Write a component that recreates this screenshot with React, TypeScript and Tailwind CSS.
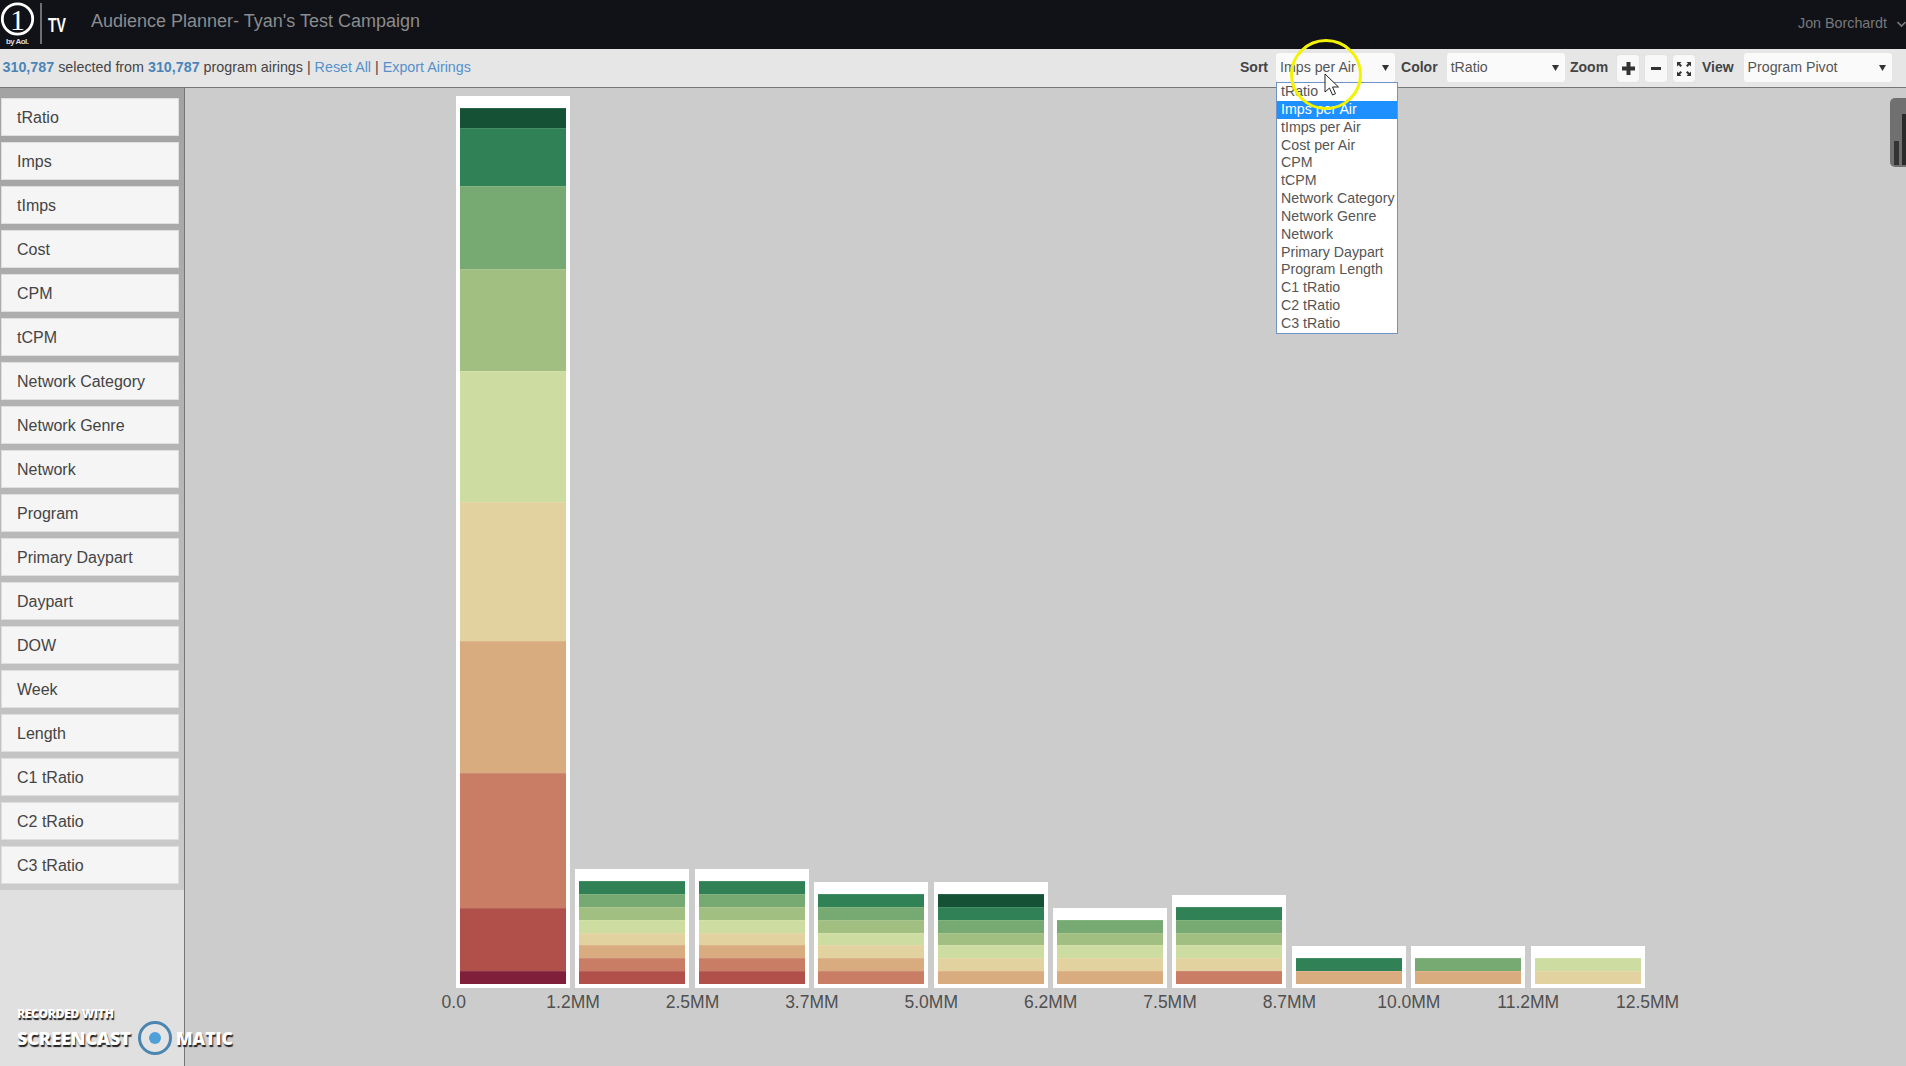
import React from 'react';

const filters = [
	'tRatio',
	'Imps',
	'tImps',
	'Cost',
	'CPM',
	'tCPM',
	'Network Category',
	'Network Genre',
	'Network',
	'Program',
	'Primary Daypart',
	'Daypart',
	'DOW',
	'Week',
	'Length',
	'C1 tRatio',
	'C2 tRatio',
	'C3 tRatio',
];

const sortOptions = [
	'tRatio',
	'Imps per Air',
	'tImps per Air',
	'Cost per Air',
	'CPM',
	'tCPM',
	'Network Category',
	'Network Genre',
	'Network',
	'Primary Daypart',
	'Program Length',
	'C1 tRatio',
	'C2 tRatio',
	'C3 tRatio',
];

const scale = ['#155235', '#308155', '#77aa72', '#a0bf80', '#cddca0', '#e2d2a0', '#d9ac7f', '#c97d65', '#b1504a', '#7f1f3a'];

// each bar: list of [scale index, height in px]
const step = 12.86;
const bars: [number, number][][] = [
	[[0, 20], [1, 58], [2, 83], [3, 102], [4, 131], [5, 139], [6, 132], [7, 135], [8, 63], [9, 13]],
	[1, 2, 3, 4, 5, 6, 7, 8].map((c) => [c, step] as [number, number]),
	[1, 2, 3, 4, 5, 6, 7, 8].map((c) => [c, step] as [number, number]),
	[1, 2, 3, 4, 5, 6, 7].map((c) => [c, step] as [number, number]),
	[0, 1, 2, 3, 4, 5, 6].map((c) => [c, step] as [number, number]),
	[2, 3, 4, 5, 6].map((c) => [c, step] as [number, number]),
	[1, 2, 3, 4, 5, 7].map((c) => [c, step] as [number, number]),
	[1, 6].map((c) => [c, step] as [number, number]),
	[2, 6].map((c) => [c, step] as [number, number]),
	[4, 5].map((c) => [c, step] as [number, number]),
];

const ticks = ['0.0', '1.2MM', '2.5MM', '3.7MM', '5.0MM', '6.2MM', '7.5MM', '8.7MM', '10.0MM', '11.2MM', '12.5MM'];

function Logo() {
	return (
		<svg width="76" height="49" viewBox="0 0 76 49" className="shrink-0">
			<circle cx="17.5" cy="19" r="15.2" fill="none" stroke="#fff" strokeWidth="2.8" />
			<text x="17.5" y="29.500" textAnchor="middle" fill="#fff" fontSize="30" fontFamily="'Liberation Serif', serif">
				1
			</text>
			<text x="6" y="43.5" fill="#ddd" fontSize="8" fontWeight="700" fontFamily="'Liberation Sans', sans-serif" textLength="23">
				by Aol.
			</text>
			<rect x="40.5" y="3" width="1" height="41" fill="#ccc" />
			<text
				x="48"
				y="31.5"
				fill="#fff"
				fontSize="21"
				fontWeight="700"
				fontFamily="'Liberation Sans', sans-serif"
				textLength="18"
				lengthAdjust="spacingAndGlyphs"
			>
				TV
			</text>
		</svg>
	);
}

function Caret() {
	return (
		<svg width="7" height="6" viewBox="0 0 7 6" className="shrink-0">
			<polygon points="0,0 7,0 3.5,6" fill="#333" />
		</svg>
	);
}

function FakeSelect({ value, className }: { value: string; className: string }) {
	return (
		<div className={`flex h-[29px] items-center justify-between rounded-[3px] bg-[#fafafa] pl-[4px] pr-[6px] text-[14.2px] text-[#555] ${className}`}>
			<span>{value}</span>
			<Caret />
		</div>
	);
}

function IconButton({ children }: { children: React.ReactNode }) {
	return (
		<div className="mt-[2px] flex h-[29px] w-[24px] items-center justify-center rounded-[4px] border border-[#e2e2e2] bg-[#f8f8f8]">
			{children}
		</div>
	);
}

function Toolbar() {
	return (
		<div className="flex h-[39px] shrink-0 items-center justify-between border-b border-[#777] bg-[#e6e6e6] pr-[14px] pb-[1px] pl-[2.500px] text-[14.3px] text-[#444]">
			<div>
				<b className="text-[#4a85b8]">310,787</b> selected from <b className="text-[#4a85b8]">310,787</b> program airings |{' '}
				<span className="text-[#5591cb]">Reset All</span> | <span className="text-[#5591cb]">Export Airings</span>
			</div>
			<div className="flex items-center text-[14px] font-bold">
				<span className="w-[36px]">Sort</span>
				<div className="relative w-[119px]">
					<FakeSelect value="Imps per Air" className="w-full font-normal" />
					<div className="absolute top-[29px] left-0 z-10 w-[122px] border border-[#6f93c9] bg-white font-normal">
						{sortOptions.map((o) => (
							<div
								key={o}
								className={`h-[17.85px] pl-[4px] text-[14.2px] leading-[17.85px] whitespace-nowrap ${
									o === 'Imps per Air' ? 'bg-[#1e90ff] text-white' : 'text-[#555]'
								}`}
							>
								{o}
							</div>
						))}
					</div>
				</div>
				<span className="ml-[6px] w-[45.6px]">Color</span>
				<FakeSelect value="tRatio" className="w-[118.4px] font-normal" />
				<span className="ml-[5px] w-[46px]">Zoom</span>
				<div className="flex gap-[4px]">
					<IconButton>
						<svg width="13" height="13" viewBox="0 0 13 13">
							<path d="M4.5 0h4v4.5H13v4H8.5V13h-4V8.5H0v-4h4.5z" fill="#333" />
						</svg>
					</IconButton>
					<IconButton>
						<svg width="10" height="3" viewBox="0 0 10 3">
							<rect width="10" height="3" fill="#333" />
						</svg>
					</IconButton>
					<IconButton>
						<svg width="14" height="14" viewBox="0 0 14 14">
							<path
								d="M0 0h4.5L3 1.500 5 3.500 3.500 5 1.500 3 0 4.500zM14 0v4.500L12.500 3l-2 2L9 3.500l2-2L9.500 0zM0 14V9.500L1.500 11l2-2L5 10.500l-2 2L4.500 14zM14 14H9.500l1.500-1.500-2-2L10.500 9l2 2L14 9.500z"
								fill="#333"
							/>
						</svg>
					</IconButton>
				</div>
				<span className="ml-[6px] w-[41.6px]">View</span>
				<FakeSelect value="Program Pivot" className="w-[148.4px] font-normal" />
			</div>
		</div>
	);
}

function Sidebar() {
	return (
		<div className="w-[185px] shrink-0 border-r border-[#777] bg-[#e0e0e0]">
			<div className="flex h-[802px] flex-col gap-[6px] bg-gradient-to-b from-[#a2a2a2] to-[#cbcbcb] pt-[10px] pr-[5px] pl-[1px]">
				{filters.map((f) => (
					<div key={f} className="flex h-[38px] shrink-0 items-center border border-[#dedede] bg-[#f5f5f5] pt-[1px] pl-[15px] text-[16px] text-[#444]">
						{f}
					</div>
				))}
			</div>
		</div>
	);
}

function Chart() {
	return (
		<div className="flex min-w-0 flex-1 flex-col bg-[#cccccc] pt-[8px] pl-[271px]">
			<div className="flex h-[892px] items-end gap-[5.4px]">
				{bars.map((segments, i) => (
					<div key={i} className="w-[114px] bg-white px-[4px] pt-[12px] pb-[4px]">
						{segments.map(([c, h], j) => (
							<div key={j} className="border-t border-white/10" style={{ backgroundColor: scale[c], height: h }} />
						))}
					</div>
				))}
			</div>
			<div className="-ml-[62px] flex">
				{ticks.map((t) => (
					<div key={t} className="w-[119.4px] shrink-0 pt-[1px] text-center text-[17.5px] text-[#505050]">
						{t}
					</div>
				))}
			</div>
		</div>
	);
}

function MiniChart() {
	return (
		<div className="absolute top-[98px] right-0 flex h-[69px] w-[16px] items-end gap-[3px] rounded-l-[5px] bg-[#707070] pb-[2px] pl-[4px]">
			<div className="h-[24px] w-[5px] bg-[#333]" />
			<div className="h-[51px] w-[4px] bg-[#2a2a2a]" />
		</div>
	);
}

function Watermark() {
	return (
		<div className="absolute top-[1006px] left-[17px] font-['Open_Sans',sans-serif] font-extrabold text-white [text-shadow:1px_2px_1px_#222]">
			<div className="text-[12px] leading-[16px] tracking-[-0.3px]">RECORDED WITH</div>
			<div className="-mt-[2px] flex items-center text-[18px] leading-[26px] tracking-[-0.1px]">
				<span>SCREENCAST</span>
				<svg width="36" height="36" viewBox="0 0 36 36" className="mx-[4px] ml-[6px] shrink-0">
					<circle cx="18" cy="18" r="15.500" fill="#e4e4e4" stroke="#4a86b0" strokeWidth="3" />
					<circle cx="18" cy="18" r="6" fill="#4ea0d8" />
				</svg>
				<span className="-ml-[1px] text-[17.500px]">MATIC</span>
			</div>
		</div>
	);
}

function Highlight() {
	return (
		<svg width="80" height="80" viewBox="0 0 80 80" className="pointer-events-none absolute top-[35px] left-[1286px] z-20">
			<ellipse cx="40" cy="39.5" rx="34.500" ry="34" fill="none" stroke="#f3f300" strokeWidth="3" />
			<path d="M39 39v18l4.500-4 3 7 3-1.300-3-6.700h6z" fill="#fff" stroke="#222" strokeWidth="1" />
		</svg>
	);
}

export default function App() {
	return (
		<div className="relative flex h-screen w-full flex-col overflow-hidden font-['Liberation_Sans',Arial,sans-serif]">
			<div className="flex h-[49px] shrink-0 items-center justify-between bg-[#111217]">
				<div className="flex items-center">
					<Logo />
					<span className="-mt-[6px] ml-[15px] text-[18px] text-[#8a8c8e]">Audience Planner- Tyan's Test Campaign</span>
				</div>
				<div className="-mt-[2px] flex items-center text-[14.3px] text-[#77797b]">
					<span>Jon Borchardt</span>
					<svg width="9" height="7" viewBox="0 0 9 7" className="mt-[2px] ml-[10px]">
						<path d="M0.500 1l4 4 4-4" fill="none" stroke="#77797b" strokeWidth="1.600" />
					</svg>
				</div>
			</div>
			<Toolbar />
			<div className="flex min-h-0 flex-1">
				<Sidebar />
				<Chart />
			</div>
			<MiniChart />
			<Watermark />
			<Highlight />
		</div>
	);
}
